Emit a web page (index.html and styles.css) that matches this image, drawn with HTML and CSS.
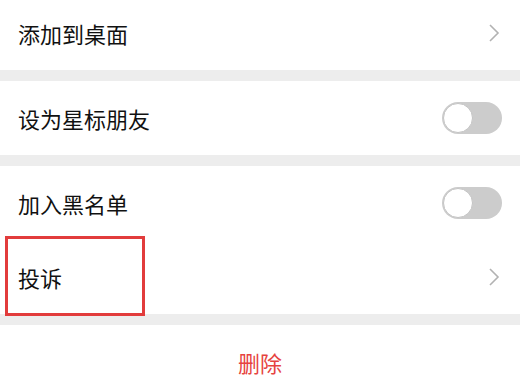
FILE: index.html
```html
<!DOCTYPE html>
<html lang="zh-CN">

<head>
    <meta charset="UTF-8">
    <meta name="viewport" content="width=device-width, initial-scale=1.0">
    <title>资料设置</title>
    <link rel="stylesheet" href="styles.css">
</head>

<body>
    <div class="page">
        <div class="group">
            <div class="cell">
                <span class="cell-title">添加到桌面</span>
                <svg class="arrow" width="12" height="20" viewBox="0 0 12 20"><path d="M2 2 L10 10 L2 18" fill="none" stroke="#b2b2b2" stroke-width="1.6"/></svg>
            </div>
        </div>

        <div class="group">
            <div class="cell">
                <span class="cell-title">设为星标朋友</span>
                <span class="switch"><span class="knob"></span></span>
            </div>
        </div>

        <div class="group">
            <div class="cell">
                <span class="cell-title">加入黑名单</span>
                <span class="switch"><span class="knob"></span></span>
            </div>
            <div class="cell marked">
                <span class="cell-title">投诉</span>
                <svg class="arrow" width="12" height="20" viewBox="0 0 12 20"><path d="M2 2 L10 10 L2 18" fill="none" stroke="#b2b2b2" stroke-width="1.6"/></svg>
                <!-- red box drawn over the row -->
                <div class="highlight"></div>
            </div>
        </div>

        <div class="group">
            <div class="cell danger">删除</div>
        </div>
    </div>
</body>

</html>
```

FILE: styles.css
```css
body {
    margin: 0;
    padding: 0;
    background-color: #ededed;
    font-family: "Noto Sans CJK SC", "Noto Sans", sans-serif;
    overflow: hidden;
}

.page {
    margin-top: -4px;
}

.group {
    background-color: #fff;
    margin-bottom: 11px;
}

.cell {
    position: relative;
    height: 74px;
    display: flex;
    align-items: center;
    justify-content: space-between;
    padding: 0 18px;
    font-size: 22px;
    color: #111;
}

.cell-title {
    line-height: 1;
}

.arrow {
    margin-right: 2px;
}

.switch {
    width: 60px;
    height: 32px;
    border-radius: 16px;
    background-color: #cccccc;
    display: flex;
    align-items: center;
    padding: 0 1px;
    box-sizing: border-box;
}

.knob {
    width: 30px;
    height: 30px;
    border-radius: 50%;
    background-color: #fff;
    box-sizing: border-box;
    border: 1px solid #c4c4c4;
}

.danger {
    justify-content: center;
    color: #e64340;
}

.highlight {
    position: absolute;
    left: 5px;
    top: -4px;
    width: 140px;
    height: 80px;
    box-sizing: border-box;
    border: 3px solid #e23c3c;
}
```
